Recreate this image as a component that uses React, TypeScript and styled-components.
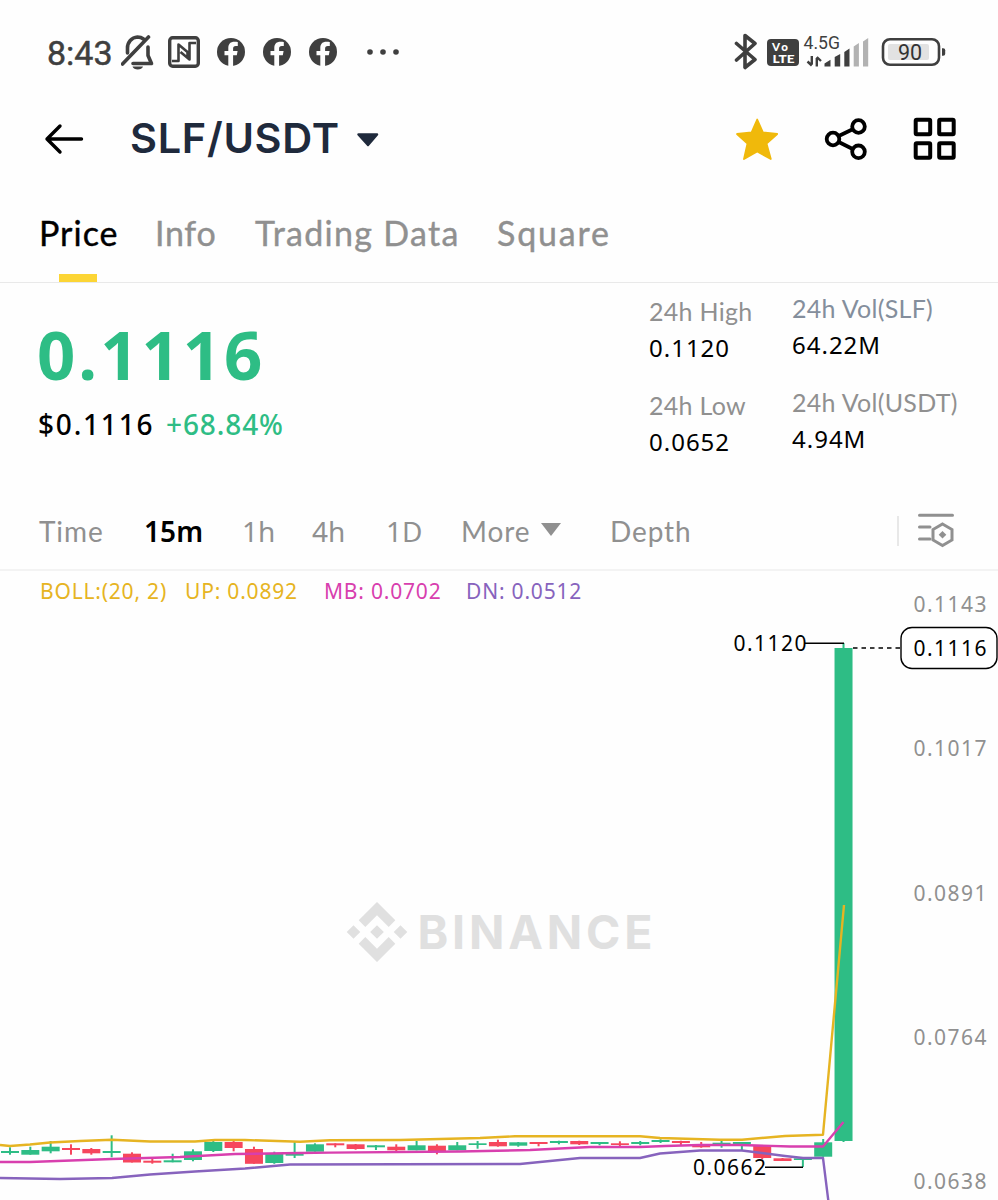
import * as React from 'react';
import styled, { createGlobalStyle } from 'styled-components';

const theme = {
    ink: '#000000',
    title: '#1f2a3c',
    muted: '#909090',
    slate: '#848e9c',
    status: '#3f3f3f',
    green: '#2ebd85',
    red: '#f6465d',
    gold: '#f0b90b',
    boll: '#e6b422',
    pink: '#d83fae',
    purple: '#8763bd',
};

const letters = "Lato, 'Noto Sans', sans-serif";
const digits = "'Noto Sans', 'Open Sans', sans-serif";
const display = "Inter, 'Noto Sans', sans-serif";

const GlobalStyle = createGlobalStyle`
    body {
        margin: 0;
        background: #fefefe;
        font-family: ${letters};
        overflow: hidden;
    }
    svg {
        display: block;
        flex-shrink: 0;
    }
`;

const Screen = styled.div`
    width: 998px;
    height: 1200px;
    overflow: hidden;
    display: flex;
    flex-direction: column;
`;

const StatusBar = styled.div`
    height: 104px;
    box-sizing: border-box;
    padding: 0 52px 0 47px;
    display: flex;
    align-items: center;
    justify-content: space-between;
    color: ${theme.status};
`;

const StatusGroup = styled.div`
    display: flex;
    align-items: center;
`;

const Clock = styled.span`
    width: 74px;
    font-family: Roboto, sans-serif;
    font-size: 34px;
    line-height: 40px;
    padding-top: 1px;
    -webkit-text-stroke: 0.5px ${theme.status};
`;

const Header = styled.header`
    height: 70px;
    box-sizing: border-box;
    padding: 0 41px 0 44px;
    display: flex;
    align-items: center;
`;

const Title = styled.h1`
    width: 226px;
    margin: 0 0 2px 46px;
    font-family: ${display};
    font-size: 41.5px;
    line-height: 60px;
    font-weight: 600;
    letter-spacing: 0.7px;
    color: ${theme.title};
    white-space: nowrap;
`;

const Actions = styled.div`
    margin-left: auto;
    display: flex;
    align-items: center;
    gap: 45px;
`;

const Tabs = styled.nav`
    height: 109px;
    box-sizing: border-box;
    border-bottom: 1px solid #e9e9e9;
    padding-left: 39px;
    display: flex;
`;

const Tab = styled.div<{ $width: number; $active?: boolean; $spacing?: number }>`
    width: ${(props) => props.$width}px;
    display: flex;
    flex-direction: column;
    justify-content: space-between;
    font-size: 34px;
    line-height: 44px;
    padding-top: 37px;
    font-weight: 400;
    letter-spacing: ${(props) => props.$spacing || 0}px;
    color: ${(props) => (props.$active ? theme.ink : theme.muted)};
    -webkit-text-stroke: 0.4px currentColor;
    white-space: nowrap;
`;

const Underline = styled.i`
    width: 38px;
    height: 8px;
    margin-left: 20px;
    background: #fcd535;
`;

const Summary = styled.section`
    height: 212px;
    display: flex;
    padding-left: 38px;
`;

const PriceBlock = styled.div`
    width: 611px;
    padding-top: 26px;
    font-family: ${digits};
`;

const LastPrice = styled.div`
    font-size: 67px;
    line-height: 90px;
    font-weight: 700;
    margin-left: -1px;
    letter-spacing: 3px;
    color: ${theme.green};
`;

const Change = styled.div`
    display: flex;
    font-size: 28px;
    line-height: 40px;
    font-weight: 500;
    margin-top: 5px;
`;

const Usd = styled.span`
    width: 128px;
    letter-spacing: 1.8px;
`;

const Percent = styled.span`
    color: ${theme.green};
    letter-spacing: 0.9px;
`;

const StatColumn = styled.div<{ $width: number; $top: number }>`
    width: ${(props) => props.$width}px;
    padding-top: ${(props) => props.$top}px;
    display: flex;
    flex-direction: column;
    gap: 22px;
`;

const Stat = styled.div`
    height: 72px;
    white-space: nowrap;
`;

const StatLabel = styled.div<{ $color?: string }>`
    font-size: 25px;
    line-height: 36px;
    letter-spacing: 0.3px;
    color: ${(props) => props.$color || theme.muted};
`;

const StatValue = styled.div`
    font-family: ${digits};
    font-size: 24px;
    line-height: 38px;
    letter-spacing: 1px;
`;

const Intervals = styled.div`
    height: 76px;
    box-sizing: border-box;
    border-bottom: 2px solid #f3f3f3;
    padding: 0 44px 2px 39px;
    display: flex;
    align-items: center;
    color: ${theme.muted};
`;

const Interval = styled.span<{ $width: number; $active?: boolean; $numeric?: boolean }>`
    width: ${(props) => props.$width}px;
    display: flex;
    align-items: center;
    gap: 11px;
    font-family: ${(props) => (props.$numeric ? digits : letters)};
    font-size: 28px;
    line-height: 40px;
    letter-spacing: ${(props) => (props.$numeric ? 0.1 : 0.9)}px;
    font-weight: ${(props) => (props.$active ? 600 : 400)};
    color: ${(props) => (props.$active ? theme.ink : theme.muted)};
`;

const Divider = styled.i`
    width: 2px;
    height: 30px;
    margin: 0 19px 0 auto;
    background: #e8e8e8;
`;

const ChartArea = styled.section`
    position: relative;
    height: 629px;
`;

const Legend = styled.div`
    position: absolute;
    top: 5px;
    left: 40px;
    display: flex;
    font-family: ${digits};
    font-size: 21px;
    line-height: 30px;
    letter-spacing: 0.8px;
`;

const LegendItem = styled.span<{ $color: string; $width: number }>`
    width: ${(props) => props.$width}px;
    color: ${(props) => props.$color};
    white-space: nowrap;
`;

const NotificationIcons = () => (
    <svg width="282" height="40" viewBox="121 32 282 40">
        <g fill="none" stroke={theme.status} strokeWidth="3.6" strokeLinecap="round" strokeLinejoin="round">
            <path d="M122.500 64 148.500 37" />
            <path d="M127.500 53V48c0-6 4-10.500 10-11 2.500 0 4.500.8 6 2M148 47v8.500l3.500 8H133" />
        </g>
        <path d="M132.500 66.500h10.500c-1 4-9.500 4-10.500 0Z" fill={theme.status} />
        <rect x="169.700" y="37.700" width="28.600" height="28.600" rx="3" fill="none" stroke={theme.status} strokeWidth="3.400" />
        <path
            d="M172 61h6.500V44.500l9 7.500v6M196 43h-6.500V59.500l-9-7.500"
            fill="none"
            stroke={theme.status}
            strokeWidth="2.600"
            strokeLinejoin="round"
        />
        {[231, 277, 323].map((x) => (
            <g key={x}>
                <circle cx={x} cy="52" r="14" fill={theme.status} />
                <path
                    d={`M${x - 2.7} 66.500V55.300h-3.800v-4.300h3.800v-3.200c0-4 2.400-6.100 6-6.100 1.500 0 3 .2 3.500.3v3.900h-2c-2 0-2.700 1.200-2.700 2.500v2.600h4.500l-.8 4.300h-3.700v11.200Z`}
                    fill="#fefefe"
                />
            </g>
        ))}
        {[370, 383, 396].map((x) => (
            <circle key={x} cx={x} cy="52" r="2.800" fill={theme.status} />
        ))}
    </svg>
);

const SystemIcons = () => (
    <svg width="212" height="40" viewBox="734 32 212 40">
        <path
            d="M736.500 43.500 755 59.500 745 67.500V35.500L755 43.500 736.500 60"
            fill="none"
            stroke={theme.status}
            strokeWidth="3.600"
            strokeLinecap="round"
            strokeLinejoin="round"
        />
        <rect x="767" y="39" width="32" height="27" rx="4" fill={theme.status} />
        <g fill="#fff" fontFamily="Lato, sans-serif" fontWeight="900">
            <text x="772" y="50.500" fontSize="11.500" textLength="16">Vo</text>
            <text x="772.500" y="63" fontSize="11.500" textLength="22" lengthAdjust="spacingAndGlyphs">LTE</text>
        </g>
        <text x="803.500" y="48.800" fontSize="17.500" fontFamily="Roboto, sans-serif" fill={theme.status} textLength="36.500" lengthAdjust="spacingAndGlyphs">
            4.5G
        </text>
        <path
            d="M811.800 56v8.500M811.800 65.500 807.500 61.500M816.800 66.500V58M816.800 57 821 61"
            fill="none"
            stroke={theme.status}
            strokeWidth="2.400"
        />
        <g fill={theme.status}>
            <path d="M824.500 66.500V63.500l6-3.800v6.800ZM834.700 66.500V57l5.500-3v12.500ZM844.300 66.500V52l5.200-3.500v18Z" />
            <path fill="#b2b2b2" d="M853.700 66.500V46.500l5.200-3.500v23.500ZM863 66.500V41.500l5.200-3.500v28.500Z" />
        </g>
        <rect x="883" y="39.200" width="56" height="25.600" rx="7" fill="none" stroke={theme.status} strokeWidth="2.600" />
        <rect x="888" y="44" width="41" height="16" rx="2" fill="#e2e2e2" />
        <path d="M942 48.300h1.200a2 2 0 0 1 2 2v3.400a2 2 0 0 1-2 2H942Z" fill={theme.status} />
        <text x="898" y="59.800" fontSize="21.500" fontFamily="Roboto, sans-serif" fill="#333" textLength="24">90</text>
    </svg>
);

const BackArrow = () => (
    <svg width="40" height="32" viewBox="0 0 40 32" fill="none" stroke="#000" strokeWidth="3.400" strokeLinecap="round" strokeLinejoin="round">
        <path d="M37.500 16H3M16 3 3 16 16 29" />
    </svg>
);

const Caret = () => (
    <svg width="24" height="16" viewBox="0 0 24 16">
        <path d="M2.500 3.500h18.500L12 14Z" fill={theme.title} stroke={theme.title} strokeWidth="2.500" strokeLinejoin="round" />
    </svg>
);

const Star = () => (
    <svg width="44" height="44" viewBox="0 0 44 44">
        <path
            d="M22.200 2.500 28 15.500 42.200 17 31.500 26.500 35.800 42 22.200 34.500 9 42 12.500 26.500 2 17 16.500 15.500Z"
            fill={theme.gold}
            stroke={theme.gold}
            strokeWidth="1.800"
            strokeLinejoin="round"
        />
    </svg>
);

const Share = () => (
    <svg width="44" height="44" viewBox="0 0 44 44" fill="none" stroke="#000" strokeWidth="3.800">
        <circle cx="9" cy="22" r="6.300" />
        <circle cx="34.500" cy="9.500" r="6.300" />
        <circle cx="34.500" cy="34.800" r="6.300" />
        <path d="M14.700 19 28.700 12.300M14.700 25 28.700 32" />
    </svg>
);

const Grid = () => (
    <svg width="44" height="44" viewBox="0 0 44 44" fill="none" stroke="#000" strokeWidth="4">
        <rect x="2.700" y="2.800" width="14.500" height="14.500" rx="1" />
        <rect x="26.200" y="2.800" width="14.500" height="14.500" rx="1" />
        <rect x="2.700" y="26.300" width="14.500" height="14.500" rx="1" />
        <rect x="26.200" y="26.300" width="14.500" height="14.500" rx="1" />
    </svg>
);

const ChartSettings = () => (
    <svg width="36" height="36" viewBox="0 0 36 36" fill="none" stroke={theme.muted} strokeWidth="3">
        <path d="M1.500 2.300h33M1.500 14h10.500M1.500 26h10.500" strokeLinecap="round" />
        <path d="M24.500 11 34 16.500v10.500L24.500 32.500 15 27V16.500Z" />
        <path d="M24.500 18 28.300 21.700 24.500 25.500 20.700 21.700Z" fill={theme.muted} stroke="none" />
    </svg>
);

// wick top, body top, body bottom, wick bottom, rising
type Candle = [number, number, number, number, boolean];

const candles: Candle[] = [
    [1147.3, 1151, 1153, 1154.7, true],
    [1146.7, 1150, 1154.7, 1154.7, true],
    [1141, 1146.7, 1151.3, 1153.3, true],
    [1144.3, 1148, 1150, 1154.7, false],
    [1148, 1149, 1153.3, 1154.7, false],
    [1135.3, 1151, 1153, 1157.3, true],
    [1152.3, 1153.7, 1162.5, 1162.5, false],
    [1158, 1160.7, 1162.7, 1163.7, false],
    [1153.7, 1160.3, 1162.3, 1162.3, true],
    [1149.3, 1151.3, 1160, 1161.3, true],
    [1140.7, 1142, 1151, 1152, true],
    [1140, 1142, 1148, 1151.3, false],
    [1146.7, 1149, 1163.8, 1163.8, false],
    [1151.7, 1153.3, 1163, 1163.8, true],
    [1142, 1153.7, 1155.7, 1158, true],
    [1143.3, 1144.3, 1151.7, 1151.7, true],
    [1143.3, 1143.3, 1145.3, 1147.3, false],
    [1144, 1144.3, 1149, 1149.7, false],
    [1145, 1145.3, 1147.3, 1150, true],
    [1144.3, 1146.7, 1150.3, 1151.3, false],
    [1141, 1145.3, 1150.3, 1150.3, true],
    [1144.3, 1145.7, 1152, 1154.3, false],
    [1142, 1145.3, 1150.3, 1150.3, true],
    [1141, 1143.3, 1145, 1148.7, true],
    [1139.7, 1142, 1146.3, 1146.7, false],
    [1142, 1142.3, 1145.7, 1146.7, true],
    [1142, 1142, 1144, 1146.3, false],
    [1140.7, 1141, 1143, 1144.3, true],
    [1140.7, 1141, 1144.3, 1145, false],
    [1142, 1142, 1144, 1145.3, true],
    [1141.3, 1143.3, 1145, 1146.7, false],
    [1141, 1142, 1144, 1145.3, true],
    [1139.3, 1140, 1142, 1143, true],
    [1140.7, 1141, 1143, 1145.7, false],
    [1142, 1145.7, 1147.3, 1147.7, false],
    [1140, 1142.7, 1144.7, 1147.7, true],
    [1142, 1142, 1144, 1150, true],
    [1145.7, 1145.7, 1158, 1159.3, false],
    [1158, 1158.3, 1161, 1161, false],
    [1158.3, 1158.3, 1160, 1167, true],
    [1139, 1142.3, 1156.7, 1156.7, true],
    [643, 648, 1141, 1142, true],
];

const upper =
    'M0 1145 10 1146 30 1144.500 50 1142.500 80 1141 112 1139.800 150 1141.500 195 1141.500 215 1140 245 1140 300 1141.700 330 1140.300 400 1140 480 1138 515 1136.300 640 1136.300 660 1138 720 1139.700 742 1139.700 785 1136 823 1134.700 844 905';
const middle =
    'M0 1162 30 1162 112 1159 180 1157 235 1154 300 1153 330 1152.600 460 1151.500 530 1150 590 1147 640 1147 665 1146 700 1145 740 1145 790 1146.500 823 1146.500 843.500 1122';
const lower =
    'M0 1178 60 1179 112 1178 150 1174.500 195 1171.500 245 1168.500 290 1164.500 520 1164 580 1158 640 1158 660 1153.500 700 1150.500 742 1150.500 785 1156 803 1158 823 1158 828.500 1202';

const axis = [
    { label: '0.1143', y: 612 },
    { label: '0.1017', y: 756 },
    { label: '0.0891', y: 900.5 },
    { label: '0.0764', y: 1044.5 },
    { label: '0.0638', y: 1189 },
];

const Chart = () => (
    <svg width="998" height="629" viewBox="0 571 998 629" fontFamily={digits} fontSize="21">
        <g fill="#e0e0e0">
            <path d="M377 902 395.300 920.300 388.700 927 377 915.300 365.300 927 358.700 920.300Z" />
            <path d="M377 962 395.300 943.700 388.700 937 377 948.700 365.300 937 358.700 943.700Z" />
            <path d="M377 925.200 383.800 932 377 938.800 370.200 932Z" />
            <path d="M353.500 925.200 360.300 932 353.500 938.800 346.700 932Z" />
            <path d="M400.500 925.200 407.300 932 400.500 938.800 393.700 932Z" />
            <text x="417.500" y="949" fontSize="46.500" fontWeight="700" fontFamily={display} textLength="235">
                BINANCE
            </text>
        </g>
        {candles.map(([high, top, bottom, low, rising], i) => {
            const x = 10 + i * 20.33;
            return (
                <g key={i} fill={rising ? theme.green : theme.red}>
                    <rect x={x - 1} y={high} width="2" height={low - high} />
                    <rect x={x - 9} y={top} width="18" height={bottom - top} />
                </g>
            );
        })}
        <g fill="none" strokeWidth="2.400" strokeLinejoin="round">
            <path d={lower} stroke={theme.purple} />
            <path d={middle} stroke={theme.pink} />
            <path d={upper} stroke={theme.boll} />
        </g>
        <g stroke="#000" strokeWidth="1.400" fill="none">
            <path d="M805 643.300H844M765 1167.300H803" />
            <path d="M853 648H900" strokeDasharray="4.500 4" />
            <rect x="901" y="627.500" width="96" height="41" rx="11" fill="#fff" />
        </g>
        <text x="733.500" y="651" textLength="73">0.1120</text>
        <text x="693" y="1175" textLength="73">0.0662</text>
        <text x="913.500" y="655.500" textLength="73">0.1116</text>
        <g fill={theme.muted}>
            {axis.map(({ label, y }) => (
                <text key={label} x="913.500" y={y} textLength="73">
                    {label}
                </text>
            ))}
        </g>
    </svg>
);

const App = () => (
    <>
        <GlobalStyle />
        <Screen>
            <StatusBar>
                <StatusGroup>
                    <Clock>8:43</Clock>
                    <NotificationIcons />
                </StatusGroup>
                <SystemIcons />
            </StatusBar>
            <Header>
                <BackArrow />
                <Title>SLF/USDT</Title>
                <Caret />
                <Actions>
                    <Star />
                    <Share />
                    <Grid />
                </Actions>
            </Header>
            <Tabs>
                <Tab $width={116} $active $spacing={1}>
                    Price
                    <Underline />
                </Tab>
                <Tab $width={100} $spacing={0.7}>Info</Tab>
                <Tab $width={242} $spacing={1.3}>Trading Data</Tab>
                <Tab $width={120} $spacing={1.8}>Square</Tab>
            </Tabs>
            <Summary>
                <PriceBlock>
                    <LastPrice>0.1116</LastPrice>
                    <Change>
                        <Usd>$0.1116</Usd>
                        <Percent>+68.84%</Percent>
                    </Change>
                </PriceBlock>
                <StatColumn $width={143} $top={10}>
                    <Stat>
                        <StatLabel>24h High</StatLabel>
                        <StatValue>0.1120</StatValue>
                    </Stat>
                    <Stat>
                        <StatLabel>24h Low</StatLabel>
                        <StatValue>0.0652</StatValue>
                    </Stat>
                </StatColumn>
                <StatColumn $width={180} $top={7}>
                    <Stat>
                        <StatLabel $color={theme.slate}>24h Vol(SLF)</StatLabel>
                        <StatValue>64.22M</StatValue>
                    </Stat>
                    <Stat>
                        <StatLabel>24h Vol(USDT)</StatLabel>
                        <StatValue>4.94M</StatValue>
                    </Stat>
                </StatColumn>
            </Summary>
            <Intervals>
                <Interval $width={105}>Time</Interval>
                <Interval $width={98} $active $numeric>15m</Interval>
                <Interval $width={70} $numeric>1h</Interval>
                <Interval $width={74} $numeric>4h</Interval>
                <Interval $width={75} $numeric>1D</Interval>
                <Interval $width={149}>
                    More
                    <svg width="20" height="16" viewBox="0 0 20 16">
                        <path d="M0 0h20L10 13Z" fill={theme.muted} />
                    </svg>
                </Interval>
                <Interval $width={90}>Depth</Interval>
                <Divider />
                <ChartSettings />
            </Intervals>
            <ChartArea>
                <Chart />
                <Legend>
                    <LegendItem $color={theme.boll} $width={145}>BOLL:(20, 2)</LegendItem>
                    <LegendItem $color={theme.boll} $width={139}>UP: 0.0892</LegendItem>
                    <LegendItem $color={theme.pink} $width={142}>MB: 0.0702</LegendItem>
                    <LegendItem $color={theme.purple} $width={130}>DN: 0.0512</LegendItem>
                </Legend>
            </ChartArea>
        </Screen>
    </>
);

export default App;
